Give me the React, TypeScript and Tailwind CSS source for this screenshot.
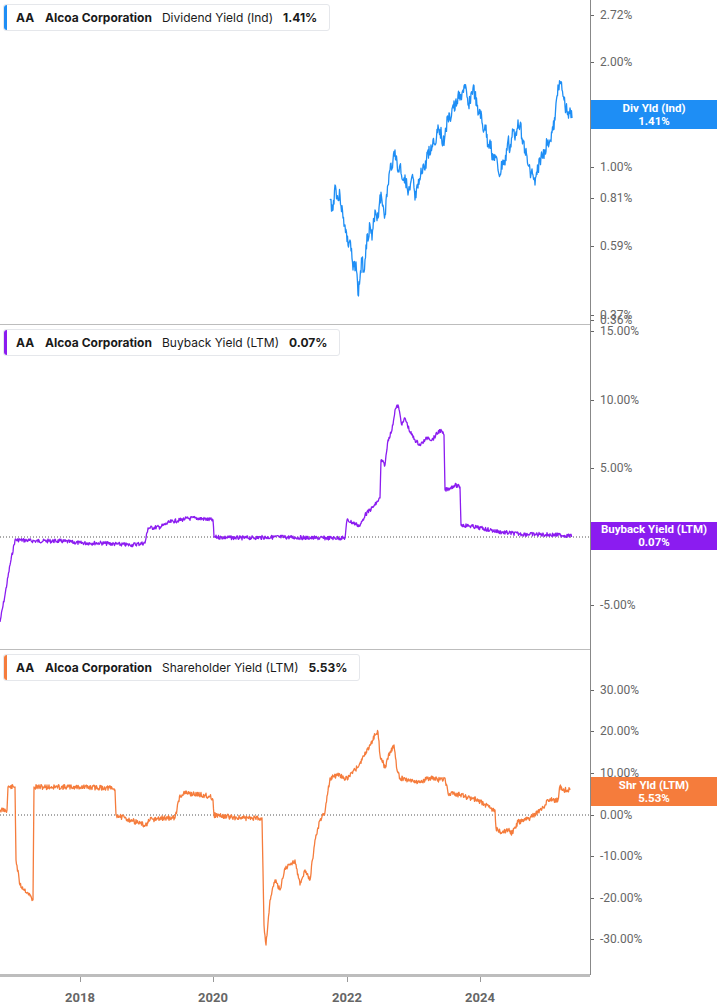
import React from "react";

type P = [number, number];
function rnd(seed: number) {
  let s = seed;
  return () => {
    s = (s * 9301 + 49297) % 233280;
    return s / 233280;
  };
}
function path(pts: P[], top: number, jitter: number, seed: number) {
  const r = rnd(seed);
  let d = "";
  for (let i = 0; i < pts.length - 1; i++) {
    const [x0, y0] = pts[i];
    const [x1, y1] = pts[i + 1];
    const n = Math.max(1, Math.round((x1 - x0) * 2));
    for (let k = 0; k < n; k++) {
      const t = k / n;
      const x = x0 + (x1 - x0) * t;
      const y = y0 + (y1 - y0) * t + (k === 0 ? 0 : (r() - 0.5) * jitter);
      d += (d ? "L" : "M") + x.toFixed(1) + " " + (y - top).toFixed(1);
    }
  }
  const l = pts[pts.length - 1];
  d += "L" + l[0] + " " + (l[1] - top);
  return d;
}

const blue: P[] = [[330,200],[333,210],[335,185],[338,200],[340,195],[343,218],[345,225],[348,245],[350,240],[353,270],[356,262],[358,295],[362,260],[364,272],[366,245],[370,225],[372,240],[375,210],[378,218],[380,195],[383,205],[385,215],[388,185],[390,170],[393,160],[395,150],[398,172],[400,165],[403,180],[405,175],[408,195],[410,190],[413,178],[415,200],[418,188],[420,180],[423,165],[425,170],[428,150],[430,155],[433,140],[435,145],[438,125],[440,130],[443,142],[445,135],[448,118],[450,120],[453,105],[455,110],[458,95],[460,100],[463,90],[465,88],[468,105],[470,100],[473,88],[475,95],[478,115],[480,110],[483,130],[485,125],[488,145],[490,140],[493,160],[495,155],[498,170],[500,175],[503,160],[505,165],[508,140],[510,150],[513,130],[515,140],[518,120],[520,125],[523,140],[525,150],[528,165],[530,170],[533,175],[535,185],[538,168],[540,160],[543,155],[545,150],[548,140],[550,140],[553,130],[555,120],[558,85],[560,82],[562,90],[564,100],[566,110],[569,112],[572,118]];
const purple: P[] = [[0,622],[5,595],[10,565],[15,540],[20,540],[35,541],[60,541],[80,543],[100,543],[130,545],[145,543],[148,528],[160,527],[170,522],[185,519],[195,518],[213,520],[214,537],[240,538],[280,537],[315,538],[345,538],[347,520],[360,526],[365,515],[375,505],[380,498],[381,460],[385,465],[388,440],[392,430],[395,410],[398,405],[402,425],[405,418],[410,432],[415,440],[420,445],[425,440],[428,437],[432,440],[440,430],[444,435],[445,490],[450,488],[455,485],[460,487],[461,525],[470,526],[480,528],[490,530],[500,532],[520,534],[560,535],[572,536]];
const orange: P[] = [[0,810],[7,810],[8,787],[15,787],[16,860],[20,885],[28,893],[33,900],[34,787],[80,787],[110,788],[115,790],[116,815],[130,820],[140,823],[145,826],[150,820],[165,818],[175,818],[180,795],[182,795],[185,793],[210,796],[213,800],[214,815],[240,818],[262,818],[264,925],[266,945],[270,900],[275,880],[280,890],[285,868],[290,865],[295,860],[300,885],[305,870],[310,880],[315,840],[320,820],[325,812],[330,778],[340,775],[345,780],[355,770],[362,760],[366,752],[370,745],[375,735],[378,732],[380,755],[385,768],[390,752],[394,745],[397,770],[400,778],[410,780],[420,782],[430,778],[440,780],[445,778],[448,793],[460,795],[478,800],[490,808],[495,810],[496,828],[500,832],[508,830],[512,833],[518,822],[530,818],[540,810],[545,805],[548,800],[558,800],[560,786],[562,790],[565,790],[570,790]];

function Header({ color, label, val }: { color: string; label: string; val: string }) {
  return (
    <div className="absolute left-[3px] top-[4px] flex items-center h-[27px] bg-white border border-[#e5e7eb] rounded-[3px] pr-[12px] text-[12px] text-[#1a1a1a] font-[Inter,sans-serif]">
      <div className="w-[3px] h-full rounded-l-[3px]" style={{ background: color }} />
      <span className="font-bold ml-[9px]">AA</span>
      <span className="font-bold ml-[11px]">Alcoa Corporation</span>
      <span className="ml-[10px]">{label}</span>
      <span className="font-bold ml-[10px]">{val}</span>
    </div>
  );
}

function Panel({ top, color, pts, jit, seed, label, val, ticks, badge, zero }: any) {
  return (
    <div className="flex h-[325px]">
      <div className="relative w-[590px] border-b border-[#bdbdbd]">
        <svg className="absolute inset-0" width="590" height="325">
          {zero !== undefined && <line x1="0" x2="590" y1={zero - top} y2={zero - top} stroke="#555" strokeDasharray="1 2" strokeWidth="1" />}
          <path d={path(pts, top, jit, seed)} fill="none" stroke={color} strokeWidth="1.3" strokeLinejoin="round" />
        </svg>
        <Header color={color} label={label} val={val} />
      </div>
      <div className="relative flex-1 border-l border-[#888] font-[Roboto,sans-serif] text-[12px] text-[#666]">
        {ticks.map(([t, y]: [string, number]) => (
          <div key={t + y} className="absolute left-0 flex items-center" style={{ top: y - top - 8 }}>
            <div className="w-[3px] h-[1px] bg-[#666]" />
            <span className="ml-[6px] leading-[16px]">{t}</span>
          </div>
        ))}
        <div className="absolute left-0 right-0 flex flex-col items-center justify-center text-white font-bold text-[11.5px] leading-[13px]" style={{ top: badge[2] - top, height: badge[3], background: color }}>
          <span>{badge[0]}</span>
          <span>{badge[1]}</span>
        </div>
      </div>
    </div>
  );
}

export default function App() {
  return (
    <div className="w-[717px] h-[1005px] bg-white flex flex-col overflow-hidden">
      <Panel top={0} color="#1e8ef5" pts={blue} jit={14} seed={3} label="Dividend Yield (Ind)" val="1.41%"
        ticks={[["2.72%",15],["2.00%",62],["1.00%",167],["0.81%",198],["0.59%",246],["0.37%",315],["0.36%",320]]}
        badge={["Div Yld (Ind)","1.41%",100,29]} />
      <Panel top={325} color="#8b1cf0" pts={purple} jit={4} seed={7} label="Buyback Yield (LTM)" val="0.07%" zero={537}
        ticks={[["15.00%",331],["10.00%",400],["5.00%",468],["-5.00%",605]]}
        badge={["Buyback Yield (LTM)","0.07%",522,28]} />
      <Panel top={650} color="#f57c3c" pts={orange} jit={5} seed={11} label="Shareholder Yield (LTM)" val="5.53%" zero={815}
        ticks={[["30.00%",690],["20.00%",731],["10.00%",773],["0.00%",815],["-10.00%",856],["-20.00%",898],["-30.00%",939]]}
        badge={["Shr Yld (LTM)","5.53%",777,29]} />
      <div className="relative w-[590px] h-[30px] border-t-2 border-[#bdbdbd] font-[Roboto,sans-serif] text-[13px] font-bold text-[#666]">
        {[["2018",80],["2020",213],["2022",347],["2024",480]].map(([t, x]) => (
          <div key={t as string} className="absolute top-0 flex flex-col items-center w-[40px]" style={{ left: (x as number) - 20 }}>
            <div className="w-[1px] h-[5px] bg-[#999]" />
            <span className="mt-[6px]">{t}</span>
          </div>
        ))}
      </div>
    </div>
  );
}
